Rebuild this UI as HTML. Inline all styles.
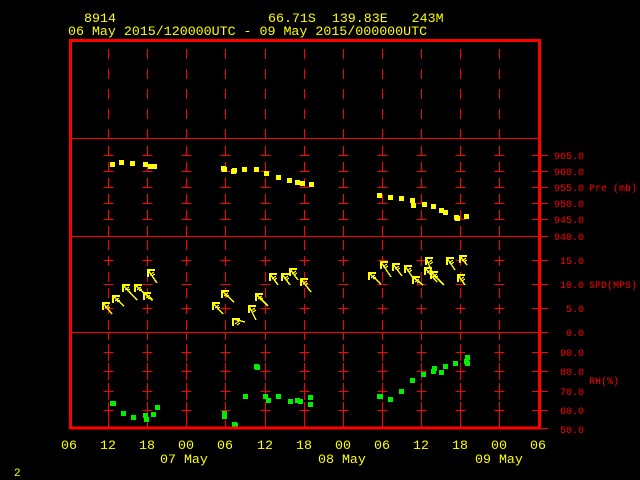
<!DOCTYPE html>
<html><head><meta charset="utf-8"><style>
html,body{margin:0;padding:0;background:#000;width:640px;height:480px;overflow:hidden}
svg{display:block}
text{font-family:"Liberation Mono","DejaVu Sans Mono",monospace}
.y{fill:#ffff00;font-size:13.3px}
.r{fill:#ff0000;font-size:10px}
</style></head><body>
<svg id="s" width="640" height="480" viewBox="0 0 640 480" xmlns="http://www.w3.org/2000/svg">
<rect width="640" height="480" fill="#000"/>
<g id="grid" stroke="#ff0000" stroke-width="1" shape-rendering="crispEdges"></g>
<g id="data" shape-rendering="crispEdges"></g>
<rect x="70.5" y="40.5" width="469" height="387.5" fill="none" stroke="#ff0000" stroke-width="3" shape-rendering="crispEdges"/>
<text class="y" x="84" y="22">8914</text>
<text class="y" x="268" y="22" xml:space="preserve">66.71S  139.83E   243M</text>
<text class="y" x="68" y="35">06 May 2015/120000UTC - 09 May 2015/000000UTC</text>
<g class="r" text-anchor="end">
<text x="584" y="159">965.0</text><text x="584" y="175">960.0</text><text x="584" y="191">955.0</text>
<text x="584" y="207">950.0</text><text x="584" y="223">945.0</text><text x="584" y="240">940.0</text>
<text x="584" y="264">15.0</text><text x="584" y="288">10.0</text><text x="584" y="312">5.0</text><text x="584" y="336">0.0</text>
<text x="584" y="356">90.0</text><text x="584" y="375">80.0</text><text x="584" y="395">70.0</text>
<text x="584" y="414">60.0</text><text x="584" y="433">50.0</text>
</g>
<text class="r" x="589" y="191" xml:space="preserve">Pre (mb)</text>
<text class="r" x="589" y="288">SPD(MPS)</text>
<text class="r" x="589" y="384">RH(%)</text>
<g class="y" text-anchor="middle">
<text x="69" y="449">06</text><text x="108" y="449">12</text><text x="147" y="449">18</text><text x="186" y="449">00</text>
<text x="225" y="449">06</text><text x="265" y="449">12</text><text x="304" y="449">18</text><text x="343" y="449">00</text>
<text x="382" y="449">06</text><text x="421" y="449">12</text><text x="460" y="449">18</text><text x="499" y="449">00</text>
<text x="538" y="449">06</text>
</g>
<text class="y" x="160" y="463">07 May</text>
<text class="y" x="318" y="463">08 May</text>
<text class="y" x="475" y="463">09 May</text>
<text class="y" x="14" y="476" style="font-size:11px">2</text>
</svg>
<script>
var NS="http://www.w3.org/2000/svg";
function el(p,t,a){var e=document.createElementNS(NS,t);for(var k in a)e.setAttribute(k,a[k]);p.appendChild(e);return e;}
var g=document.getElementById('grid'),d=document.getElementById('data');
function L(x1,y1,x2,y2,extra){var a={x1:x1,y1:y1,x2:x2,y2:y2};if(extra)for(var k in extra)a[k]=extra[k];el(g,'line',a);}
L(70,138.5,540,138.5);L(70,236.5,540,236.5);L(70,332.5,540,332.5);
var pY=[155,171,187,203,219],sY=[260,284,308],hY=[352,371,391,410];
for(var i=1;i<=12;i++){var x=Math.round(69+39.1*i)+0.5;
 if(i<12){
 L(x,49,x,138,{'stroke-dasharray':'10,10'});
 L(x,146,x,236,{'stroke-dasharray':'10,6'});
 L(x,240,x,332,{'stroke-dasharray':'10,6'});
 L(x,333,x,340);
 hY.forEach(function(y){L(x,y-8,x,y+9);});
 L(x,419,x,427);
 }
 var cs=pY.concat(sY,hY);
 cs.forEach(function(y){L(x-5,y+0.5,x+5,y+0.5);});
}
[155,171,187,203,219,236,260,284,308,332,352,371,391,410,428].forEach(function(y){L(532,y+0.5,548,y+0.5);});
var P=[[112,164],[121,162],[132,163],[145,164],[150,166],[154,166],[223,168],[224,169],[233,171],[234,170],[244,169],[256,169],[266,173],[278,177],[289,180],[297,182],[302,183],[311,184],[379,195],[390,197],[401,198],[412,200],[413,205],[424,204],[433,206],[441,210],[445,212],[456,217],[457,218],[466,216]];
P.forEach(function(p){el(d,'rect',{x:p[0]-2,y:p[1]-2,width:5,height:5,fill:'#ffff00'});});
var H=[[112,403],[113,403],[123,413],[133,417],[145,415],[146,419],[153,414],[157,407],[224,413],[224,416],[234,424],[235,425],[245,396],[256,366],[257,367],[265,396],[268,400],[278,396],[290,401],[297,400],[300,401],[310,397],[310,404],[379,396],[380,396],[390,399],[401,391],[412,380],[423,374],[433,371],[434,368],[441,372],[445,366],[455,363],[466,361],[467,357],[467,363]];
H.forEach(function(p){el(d,'rect',{x:p[0]-2,y:p[1]-2,width:5,height:5,fill:'#00ee00'});});
var A=[[103,303,112,314],[113,296,124,306],[123,285,137,300],[135,285,152,300],[144,293,153,300],[148,270,157,283],
[213,303,223,314],[222,291,234,302],[233,319,245,322],[249,306,256,320],[256,294,268,306],[270,274,278,285],[282,274,290,285],[290,269,298,280],[301,279,311,292],
[369,273,381,284],[381,262,391,277],[393,264,402,276],[405,266,413,278],[413,277,423,285],[426,258,432,272],[425,268,437,282],[431,272,444,285],[447,258,455,270],[460,256,467,265],[458,275,465,285]];
A.forEach(function(a){var hx=a[0],hy=a[1];
 el(d,'line',{x1:a[2],y1:a[3],x2:hx,y2:hy,stroke:'#ffff00','stroke-width':1.5});
 el(d,'polyline',{points:(hx+7)+','+hy+' '+hx+','+hy+' '+hx+','+(hy+7),fill:'none',stroke:'#ffff00','stroke-width':1.6});
 el(d,'line',{x1:hx+2,y1:hy+5,x2:hx+6,y2:hy+2,stroke:'#ffff00','stroke-width':1.2});
 el(d,'line',{x1:hx+4,y1:hy+6,x2:hx+7,y2:hy+4,stroke:'#ffff00','stroke-width':1});
});
</script>
</body></html>
